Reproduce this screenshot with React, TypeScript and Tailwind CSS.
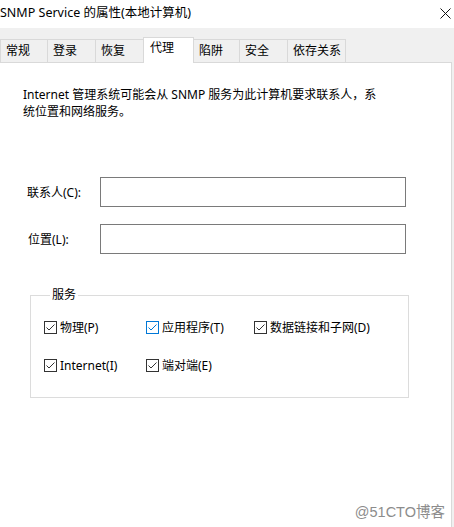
import React from "react";

const tabs = [
  { label: "常规", w: "w-[48px] border-l" },
  { label: "登录", w: "w-[48px]" },
  { label: "恢复", w: "w-[48px]" },
  { label: "代理", w: "w-[51px]", active: true },
  { label: "陷阱", w: "w-[46px]" },
  { label: "安全", w: "w-[48px]" },
  { label: "依存关系", w: "w-[58px]" },
];

function Check({ blue }: { blue?: boolean }) {
  return (
    <span
      className={`flex h-[13px] w-[13px] shrink-0 items-center justify-center border bg-white ${
        blue ? "border-[#0078d7]" : "border-[#333333]"
      }`}
    >
      <svg width="11" height="11" viewBox="0 0 11 11">
        <path
          d="M1.5 5.5 L4 8 L9.5 2.5"
          fill="none"
          stroke={blue ? "#0078d7" : "#333333"}
          strokeWidth="1"
        />
      </svg>
    </span>
  );
}

function Item({ label, blue }: { label: string; blue?: boolean }) {
  return (
    <div className="flex items-center gap-[3px] h-[17px]">
      <Check blue={blue} />
      <span className="leading-[17px]">{label}</span>
    </div>
  );
}

export default function App() {
  return (
    <div className="relative flex h-[527px] w-[454px] flex-col overflow-hidden bg-[#f0f0f0] text-[12px] text-black font-['Noto_Sans','Noto_Sans_CJK_SC',sans-serif]">
      {/* title bar */}
      <div className="flex h-[28px] shrink-0 items-center justify-between bg-white pr-[3px]">
        <span className="text-[12.5px] leading-[16px] -mt-[2px]">SNMP Service 的属性(本地计算机)</span>
        <svg width="11" height="11" viewBox="0 0 11 11" className="-mt-[2px]">
          <path d="M0.5 0.5 L10.5 10.5 M10.5 0.5 L0.5 10.5" stroke="#111" strokeWidth="1" />
        </svg>
      </div>

      {/* tab strip */}
      <div className="flex h-[34px] shrink-0 items-end pt-[9px]">
        {tabs.map((t) =>
          t.active ? (
            <div
              key={t.label}
              className={`relative z-10 -ml-[1px] -mb-[1px] h-[26px] border-l border-r border-t border-[#d9d9d9] bg-white pl-[6px] leading-[20px] ${t.w}`}
            >
              {t.label}
            </div>
          ) : (
            <div
              key={t.label}
              className={`h-[23px] border-r border-t border-[#d9d9d9] bg-[#f0f0f0] pl-[5px] leading-[22px] ${t.w}`}
            >
              {t.label}
            </div>
          )
        )}
      </div>

      {/* panel */}
      <div className="flex w-[452px] flex-1 flex-col border-r border-t border-[#d9d9d9] bg-white">
        <p className="ml-[23px] mt-[23px] leading-[17px]">
          Internet 管理系统可能会从 SNMP 服务为此计算机要求联系人，系
          <br />
          统位置和网络服务。
        </p>

        <div className="mt-[57px] flex items-center">
          <span className="w-[100px] pl-[27px] leading-[17px]">联系人(C):</span>
          <div className="h-[30px] w-[306px] border border-[#7a7a7a]" />
        </div>
        <div className="mt-[17px] flex items-center">
          <span className="w-[100px] pl-[28px] leading-[17px]">位置(L):</span>
          <div className="h-[30px] w-[306px] border border-[#7a7a7a]" />
        </div>

        <fieldset className="ml-[30px] mt-[33px] h-[111px] w-[379px] border border-[#dcdcdc] px-[13px]">
          <legend className="ml-[6px] px-[2px] leading-[16px]">服务</legend>
          <div className="mt-[16px] grid grid-cols-[102px_108px_1fr] gap-y-[21px]">
            <Item label="物理(P)" />
            <Item label="应用程序(T)" blue />
            <Item label="数据链接和子网(D)" />
            <Item label="Internet(I)" />
            <Item label="端对端(E)" />
          </div>
        </fieldset>
      </div>

      <span className="absolute bottom-[6px] right-[9px] text-[14.5px] leading-[18px] text-[#8c8c8c] font-['Liberation_Sans','Noto_Sans_CJK_SC',sans-serif]">
        @51CTO博客
      </span>
    </div>
  );
}
